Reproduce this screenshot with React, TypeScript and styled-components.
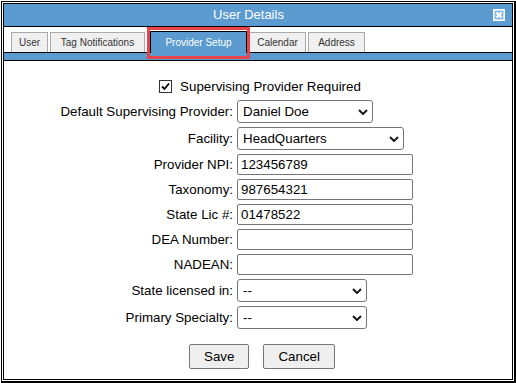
import React from 'react';
import styled, { createGlobalStyle } from 'styled-components';

const BLUE = '#5b9bd0';

const Global = createGlobalStyle`
  html, body { margin: 0; padding: 0; background: #fff; }
  body { font-family: "Liberation Sans", Arial, sans-serif; }
`;

const Frame = styled.div`
  box-sizing: border-box;
  width: 515px;
  height: 382px;
  margin: 1px 0 0 1px;
  border-style: solid;
  border-color: #000;
  border-width: 1px 2px 2px 1px;
  padding: 1px;
  background: #fff;
`;

const Dialog = styled.div`
  box-sizing: border-box;
  height: 100%;
  border: 1px solid #000;
  display: flex;
  flex-direction: column;
`;

const Header = styled.div`
  display: flex;
  align-items: center;
  height: 22px;
  background: ${BLUE};
  border-bottom: 1px solid #000;
  padding-right: 7px;
`;

const Title = styled.div`
  flex: 1;
  text-align: center;
  color: #fff;
  font-size: 13px;
  line-height: 22px;
`;

const CloseBtn = styled.span`
  display: flex;
  width: 12px;
  height: 12px;
`;

const TabStrip = styled.div`
  display: flex;
  align-items: flex-end;
  height: 25px;
  padding-left: 7px;
  border-bottom: 1px solid #000;
`;

const Tab = styled.div<{ $w: number; $active?: boolean }>`
  box-sizing: border-box;
  width: ${(p) => p.$w}px;
  height: ${(p) => (p.$active ? 22 : 20)}px;
  margin: 0 2px ${(p) => (p.$active ? -1 : 0)}px ${(p) => (p.$active ? 3 : 0)}px;
  display: flex;
  align-items: center;
  justify-content: center;
  font-size: 10px;
  color: ${(p) => (p.$active ? '#fff' : '#333')};
  background: ${(p) => (p.$active ? BLUE : '#f0f0f0')};
  border: 1px solid ${(p) => (p.$active ? '#000' : '#aaa')};
  border-bottom: none;
  position: relative;
  z-index: ${(p) => (p.$active ? 2 : 0)};
  ${(p) =>
    p.$active
      ? `&::after {
    content: '';
    position: absolute;
    left: -4px;
    right: -4px;
    top: -5px;
    bottom: -6px;
    border: 3px solid #e8454a;
    pointer-events: none;
  }`
      : ''}
`;

const Bar = styled.div`
  height: 7px;
  background: ${BLUE};
  border-bottom: 1px solid #000;
`;

const Form = styled.div`
  display: flex;
  flex-direction: column;
  padding-top: 17px;
  font-size: 13.333px;
  color: #000;
`;

const CheckRow = styled.label`
  display: flex;
  align-items: center;
  justify-content: center;
  gap: 8px;
  height: 17px;
  padding-left: 4px;
  margin-bottom: 5px;
`;

const CheckBox = styled.span`
  box-sizing: border-box;
  width: 13px;
  height: 13px;
  border: 1px solid #333;
  background: #fff;
  display: flex;
`;

const Grid = styled.div`
  display: grid;
  grid-template-columns: 229px auto;
  column-gap: 4px;
  row-gap: 4px;
  align-items: center;
  justify-items: start;
`;

const Label = styled.span`
  justify-self: end;
  white-space: nowrap;
`;

const TextInput = styled.input`
  box-sizing: border-box;
  width: 176px;
  height: 21px;
  border: 1px solid #767676;
  border-radius: 2px;
  padding: 0 3px;
  margin: 0;
  font: 13.333px "Liberation Sans", Arial, sans-serif;
  color: #000;
  background: #fff;
  outline: none;
`;

const SelectWrap = styled.span<{ $w: number }>`
  position: relative;
  display: inline-block;
  width: ${(p) => p.$w}px;
  height: 23px;
`;

const NativeSelect = styled.select`
  appearance: none;
  -webkit-appearance: none;
  box-sizing: border-box;
  width: 100%;
  height: 23px;
  margin: 0;
  border: 1px solid #767676;
  border-radius: 3px;
  padding: 0 20px 0 5px;
  font: 13.333px "Liberation Sans", Arial, sans-serif;
  color: #000;
  background: #fff;
  outline: none;
`;

const Chevron = styled.svg`
  position: absolute;
  right: 5px;
  top: 9px;
  pointer-events: none;
`;

const ButtonRow = styled.div`
  display: flex;
  justify-content: center;
  gap: 14px;
  margin-top: 15px;
  padding-left: 8px;
`;

const Button = styled.button`
  box-sizing: border-box;
  height: 25px;
  padding: 0 14px;
  margin: 0;
  border: 1px solid #767676;
  border-radius: 2px;
  background: #efefef;
  font: 13.333px "Liberation Sans", Arial, sans-serif;
  color: #000;
`;

function Select({ w, value }: { w: number; value: string }) {
  return (
    <SelectWrap $w={w}>
      <NativeSelect defaultValue={value}>
        <option value={value}>{value}</option>
      </NativeSelect>
      <Chevron width="10" height="6" viewBox="0 0 10 6">
        <path d="M1 1 L5 5 L9 1" fill="none" stroke="#1a1a1a" strokeWidth="2" />
      </Chevron>
    </SelectWrap>
  );
}

export default function App() {
  return (
    <>
      <Global />
      <Frame>
        <Dialog>
          <Header>
            <Title>User Details</Title>
            <CloseBtn>
              <svg width="12" height="12" viewBox="0 0 12 12">
                <rect x="0.75" y="0.75" width="10.5" height="10.5" fill="#8dbbe2" stroke="#fff" strokeWidth="1.5" />
                <path d="M3.5 3.5 L8.5 8.5 M8.5 3.5 L3.5 8.5" stroke="#fff" strokeWidth="2.2" />
              </svg>
            </CloseBtn>
          </Header>
          <TabStrip>
            <Tab $w={37}>User</Tab>
            <Tab $w={95}>Tag Notifications</Tab>
            <Tab $w={97} $active>
              Provider Setup
            </Tab>
            <Tab $w={57}>Calendar</Tab>
            <Tab $w={57}>Address</Tab>
          </TabStrip>
          <Bar />
          <Form>
            <CheckRow>
              <CheckBox>
                <svg width="11" height="11" viewBox="0 0 11 11">
                  <path d="M2 5.5 L4.5 8 L9 2.5" fill="none" stroke="#000" strokeWidth="1.8" />
                </svg>
              </CheckBox>
              <span>Supervising Provider Required</span>
            </CheckRow>
            <Grid>
              <Label>Default Supervising Provider:</Label>
              <Select w={136} value="Daniel Doe" />
              <Label>Facility:</Label>
              <Select w={167} value="HeadQuarters" />
              <Label>Provider NPI:</Label>
              <TextInput defaultValue="123456789" />
              <Label>Taxonomy:</Label>
              <TextInput defaultValue="987654321" />
              <Label>State Lic #:</Label>
              <TextInput defaultValue="01478522" />
              <Label>DEA Number:</Label>
              <TextInput defaultValue="" />
              <Label>NADEAN:</Label>
              <TextInput defaultValue="" />
              <Label>State licensed in:</Label>
              <Select w={130} value="--" />
              <Label>Primary Specialty:</Label>
              <Select w={130} value="--" />
            </Grid>
            <ButtonRow>
              <Button>Save</Button>
              <Button>Cancel</Button>
            </ButtonRow>
          </Form>
        </Dialog>
      </Frame>
    </>
  );
}
